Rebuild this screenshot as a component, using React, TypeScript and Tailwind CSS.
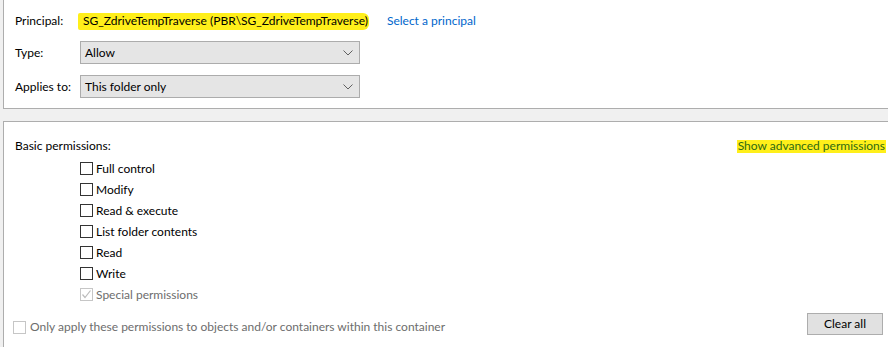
import React from "react";

const font = { fontFamily: 'Lato, "Noto Sans", Arial, sans-serif' };

function Chevron() {
  return (
    <svg width="10" height="6" viewBox="0 0 10 6" className="block">
      <path d="M0.5 0.5 L5 5 L9.5 0.5" fill="none" stroke="#606060" strokeWidth="1" />
    </svg>
  );
}

function Dropdown({ value }: { value: string }) {
  return (
    <div className="w-[280px] h-[23px] bg-[#e5e5e5] border border-[#acacac] flex items-center justify-between pl-[4px] pr-[6px]">
      <span className="text-[12px] text-black leading-none">{value}</span>
      <Chevron />
    </div>
  );
}

function Box({ disabled, checked }: { disabled?: boolean; checked?: boolean }) {
  return (
    <div
      className={
        "w-[13px] h-[13px] border bg-white flex items-center justify-center shrink-0 " +
        (disabled ? "border-[#c6c6c6]" : "border-[#333333]")
      }
    >
      {checked && (
        <svg width="11" height="11" viewBox="0 0 11 11">
          <path d="M1.5 5.5 L4 8.5 L9.5 1.5" fill="none" stroke="#bcbcbc" strokeWidth="1.2" />
        </svg>
      )}
    </div>
  );
}

const perms = ["Full control", "Modify", "Read & execute", "List folder contents", "Read", "Write"];

export default function App() {
  return (
    <div style={font} className="w-[888px] h-[347px] bg-[#f0f0f0] overflow-hidden pl-[3px] flex flex-col text-[12px] text-black">
      <div className="h-[109px] w-[890px] bg-white border-l border-b border-[#adadad] pt-[11px] pl-[11px] flex flex-col shrink-0">
        <div className="h-[20px] flex items-center">
          <span className="w-[65px]">Principal:</span>
          <span className="ml-[-2px] pl-[5px] pr-[1px] h-[17px] flex items-center bg-[#ffef1a] rounded-r-[6px] rounded-l-[2px]">
            SG_ZdriveTempTraverse (PBR\SG_ZdriveTempTraverse)
          </span>
          <span className="ml-[18px] text-[#0066cc]">Select a principal</span>
        </div>
        <div className="mt-[10px] flex items-center">
          <span className="w-[65px]">Type:</span>
          <Dropdown value="Allow" />
        </div>
        <div className="mt-[11px] flex items-center">
          <span className="w-[65px]">Applies to:</span>
          <Dropdown value="This folder only" />
        </div>
      </div>
      <div className="mt-[12px] flex-1 w-[890px] bg-white border-l border-t border-[#adadad] pt-[14px] flex flex-col">
        <div className="h-[20px] flex items-center justify-between pl-[11px] pr-[7px]">
          <span>Basic permissions:</span>
          <span className="bg-[#ffef1a] text-[#2f6a12] px-[1px] h-[13px] flex items-center">Show advanced permissions</span>
        </div>
        <div className="mt-[2px] pl-[76px] flex flex-col">
          {perms.map((p) => (
            <div key={p} className="h-[21px] flex items-center gap-[3px]">
              <Box />
              <span>{p}</span>
            </div>
          ))}
          <div className="h-[21px] flex items-center gap-[3px]">
            <Box disabled checked />
            <span className="text-[#6d6d6d]">Special permissions</span>
          </div>
        </div>
        <div className="mt-[8px] flex items-start justify-between pl-[9px] pr-[10px]">
          <div className="flex items-center gap-[4px] mt-[5px] h-[18px]">
            <Box disabled />
            <span className="text-[#6d6d6d]">Only apply these permissions to objects and/or containers within this container</span>
          </div>
          <div className="w-[76px] h-[22px] bg-[#e1e1e1] border border-[#adadad] flex items-center justify-center">
            Clear all
          </div>
        </div>
      </div>
    </div>
  );
}
